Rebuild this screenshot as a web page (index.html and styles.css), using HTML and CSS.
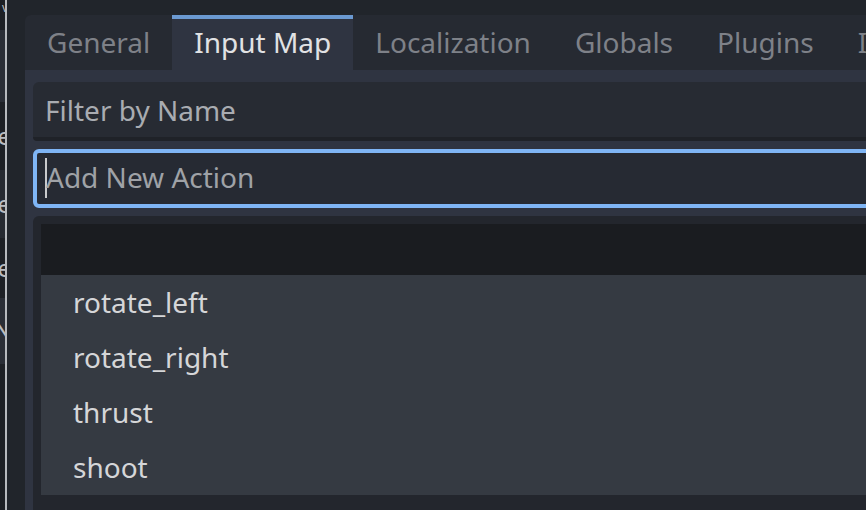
FILE: index.html
```html
<!DOCTYPE html>
<html>
<head>
<meta charset="utf-8">
<link rel="stylesheet" href="styles.css">
</head>
<body>
<div class="window">
  <div class="side">
    <div class="side-row s1"><span>v</span></div>
    <div class="side-row s2"></div>
    <div class="side-row s3"><span>e</span></div>
    <div class="side-row s4"><span>e</span></div>
    <div class="side-row s5"><span>e</span></div>
    <div class="side-row s6"><span>N</span></div>
    <div class="side-row s7"></div>
  </div>
  <div class="divider"></div>
  <div class="gutter"></div>
  <div class="main">
    <div class="tabs">
      <div class="tab">General</div>
      <div class="tab active">Input Map</div>
      <div class="tab">Localization</div>
      <div class="tab">Globals</div>
      <div class="tab">Plugins</div>
      <div class="tab">Import Defaults</div>
    </div>
    <div class="panel">
      <div class="field filter">Filter by Name</div>
      <div class="field add"><span class="caret"></span><span class="add-text">Add New Action</span></div>
      <div class="tree">
        <div class="tree-head"></div>
        <div class="row">rotate_left</div>
        <div class="row">rotate_right</div>
        <div class="row">thrust</div>
        <div class="row">shoot</div>
      </div>
    </div>
  </div>
</div>
</body>
</html>
```

FILE: styles.css
```css
html, body {
  margin: 0;
  padding: 0;
  background: #21252b;
}

body {
  width: 866px;
  height: 510px;
  overflow: hidden;
  font-family: "Noto Sans", "Open Sans", sans-serif;
  font-size: 28px;
}

.window {
  display: flex;
  height: 510px;
}

.side {
  width: 5px;
  overflow: hidden;
  display: flex;
  flex-direction: column;
  background: #1d2025;
}

.side-row {
  display: flex;
  justify-content: flex-end;
  align-items: center;
  color: #b9bcc1;
  font-size: 24px;
  line-height: 1;
  white-space: nowrap;
}

.side-row span {
  margin-right: -6px;
}

.s1 { height: 30px; }
.s1 span { font-size: 12px; margin-right: -3px; margin-top: -14px; }
.s2 { height: 72px; background: #2a2e36; }
.s3 { height: 68px; }
.s4 { height: 68px; background: #262a31; }
.s5 { height: 60px; }
.s6 { height: 66px; background: #2a2e36; }
.s6 span { margin-top: -4px; }
.s7 { flex: 1; }

.divider {
  width: 2px;
  background: #b7babe;
}

.gutter {
  width: 18px;
}

.main {
  flex: 1;
  min-width: 0;
  padding-top: 15px;
  overflow: hidden;
  display: flex;
  flex-direction: column;
}

.tabs {
  display: flex;
  height: 55px;
  background: #262a32;
  border-top-left-radius: 6px;
  white-space: nowrap;
}

.tab {
  flex: none;
  padding: 0 22px;
  line-height: 55px;
  color: #7e8188;
}

.tab.active {
  background: #2f3441;
  color: #e1e2e4;
  box-shadow: inset 0 4px 0 #6b99d1;
}

.panel {
  flex: 1;
  margin-right: -60px;
  background: #2f3441;
  padding: 12px 0 0 8px;
  display: flex;
  flex-direction: column;
  gap: 8px;
}

.field {
  display: flex;
  align-items: center;
  white-space: nowrap;
}

.filter {
  height: 55px;
  background: #272b33;
  border-bottom: 4px solid #1f2228;
  border-top-left-radius: 6px;
  border-bottom-left-radius: 4px;
  padding-left: 12px;
  color: #a9acb1;
}

.add {
  height: 51px;
  background: #262a33;
  border: 4px solid #7fb5f5;
  border-radius: 6px;
  padding-left: 8px;
  color: #9fa2a7;
}

.add-text {
  margin-top: -3px;
  margin-left: -1px;
}

.caret {
  width: 2px;
  height: 40px;
  background: #c9cacc;
  margin-top: -2px;
}

.tree {
  flex: 1;
  background: #23262d;
  border-top-left-radius: 6px;
  padding: 8px 0 0 8px;
  display: flex;
  flex-direction: column;
}

.tree-head {
  height: 51px;
  background: #1a1c20;
}

.row {
  height: 55px;
  line-height: 55px;
  padding-left: 32px;
  background: #353a42;
  color: #d5d6d8;
}
```
